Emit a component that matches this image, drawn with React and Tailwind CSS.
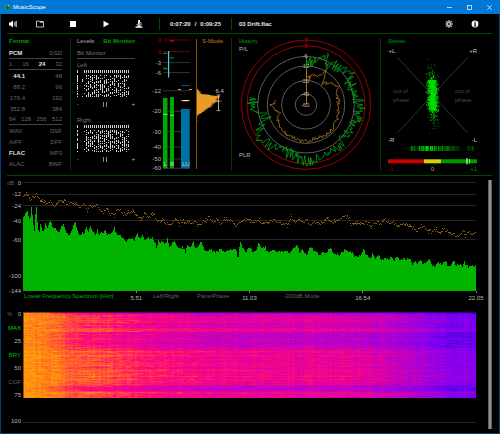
import React from "react";

/* ---------- helpers ---------- */

function seeded(seed) {
  let s = seed;
  return () => {
    s = (s * 1664525 + 1013904223) % 4294967296;
    return s / 4294967296;
  };
}

function interp(points, x) {
  if (x <= points[0][0]) return points[0][1];
  for (let i = 1; i < points.length; i++) {
    if (x <= points[i][0]) {
      const [x0, y0] = points[i - 1];
      const [x1, y1] = points[i];
      return y0 + ((y1 - y0) * (x - x0)) / (x1 - x0);
    }
  }
  return points[points.length - 1][1];
}

function pairs(list) {
  const out = [];
  for (let i = 0; i < list.length; i += 2) out.push([list[i], list[i + 1]]);
  return out;
}

/* ---------- spectrum data, in thirds of a pixel ---------- */

const LEVELS = pairs([
  69, 140, 75, 122, 80, 115, 85, 130, 90, 150, 94, 108, 98, 130, 101, 170, 104, 178, 107, 102, 110, 105, 113, 170, 118, 178,
  121, 155, 126, 172, 131, 180, 136, 155, 141, 165, 146, 160, 151, 143, 156, 165, 162, 170, 170, 172, 176, 185, 182, 165,
  190, 158, 198, 180, 205, 190, 213, 180, 220, 158, 226, 153, 232, 172, 238, 192, 246, 185, 252, 182, 259, 165, 265, 178,
  270, 162, 278, 175, 285, 188, 292, 172, 297, 192, 304, 178, 310, 186, 316, 175, 323, 188, 330, 185, 338, 182, 343, 168,
  350, 188, 360, 188, 368, 200, 378, 208, 385, 198, 395, 200, 403, 205, 410, 183, 418, 198, 426, 188, 434, 202, 442, 195,
  450, 200, 458, 197, 466, 212, 470, 232, 474, 205, 480, 218, 486, 207, 494, 218, 502, 201, 508, 225, 515, 218, 521, 205,
  530, 222, 540, 230, 548, 225, 556, 240, 562, 218, 570, 228, 580, 210, 586, 228, 594, 222, 604, 208, 612, 235, 620, 240,
  630, 230, 640, 238, 650, 240, 660, 232, 670, 238, 680, 237, 690, 234, 700, 232, 708, 228, 714, 262, 720, 212, 728, 225,
  738, 240, 745, 228, 758, 240, 766, 232, 773, 215, 782, 225, 792, 225, 800, 240, 810, 235, 818, 232, 826, 242, 835, 235,
  845, 240, 855, 235, 865, 242, 875, 232, 882, 228, 888, 215, 894, 240, 902, 232, 910, 240, 918, 250, 928, 222, 938, 240,
  945, 235, 955, 252, 963, 240, 972, 245, 980, 235, 988, 230, 996, 240, 1006, 245, 1015, 250, 1022, 240, 1032, 232,
  1042, 242, 1050, 238, 1060, 252, 1070, 255, 1078, 250, 1087, 233, 1096, 248, 1105, 260, 1115, 245, 1122, 260, 1132, 250,
  1140, 262, 1150, 258, 1160, 262, 1170, 255, 1180, 265, 1188, 250, 1195, 265, 1205, 260, 1215, 262, 1224, 258, 1234, 275,
  1242, 270, 1250, 275, 1258, 262, 1266, 278, 1275, 272, 1284, 260, 1293, 280, 1302, 282, 1312, 270, 1322, 280, 1332, 265,
  1342, 285, 1350, 280, 1358, 267, 1366, 280, 1376, 275, 1384, 285, 1390, 270, 1400, 285, 1410, 278, 1420, 283, 1426, 272,
]);

const PEAKS = pairs([
  69, 74, 80, 66, 90, 80, 100, 75, 108, 68, 115, 80, 122, 85, 130, 90, 140, 92, 150, 88, 160, 100, 170, 95, 180, 88, 195, 85,
  200, 95, 210, 88, 220, 98, 230, 95, 240, 105, 250, 95, 260, 110, 270, 98, 280, 105, 290, 98, 300, 112, 310, 120, 320, 110,
  330, 125, 342, 130, 350, 115, 360, 110, 368, 125, 380, 127, 390, 120, 396, 112, 405, 125, 415, 135, 425, 138, 435, 122,
  445, 138, 455, 125, 462, 130, 470, 145, 480, 148, 490, 145, 500, 155, 512, 152, 525, 140, 535, 150, 545, 147, 555, 153,
  565, 143, 575, 155, 583, 145, 595, 160, 605, 148, 615, 150, 625, 135, 632, 140, 642, 150, 650, 135, 660, 155, 668, 145,
  680, 138, 690, 142, 700, 155, 710, 160, 720, 150, 730, 140, 740, 140, 750, 148, 770, 147, 780, 150, 800, 152, 815, 143,
  830, 148, 845, 158, 860, 150, 870, 135, 880, 150, 895, 140, 905, 150, 915, 140, 925, 155, 940, 148, 955, 153, 970, 148,
  980, 132, 990, 150, 1005, 148, 1015, 140, 1030, 132, 1040, 135, 1050, 155, 1065, 150, 1080, 155, 1095, 152, 1110, 160,
  1125, 150, 1140, 153, 1150, 140, 1160, 150, 1175, 150, 1190, 162, 1205, 150, 1220, 160, 1235, 165, 1245, 178, 1260, 160,
  1275, 168, 1290, 178, 1300, 172, 1315, 180, 1330, 172, 1340, 180, 1355, 185, 1370, 192, 1385, 178, 1395, 185, 1405, 178,
  1415, 188, 1426, 182,
]);

function spectrumPath() {
  const rnd = seeded(7);
  let d = "M0 115";
  for (let x = 0; x < 452; x++) {
    const y = interp(LEVELS, 69 + x * 3 + 1) / 3 - 4 + (rnd() - 0.5) * 2.4;
    d += `V${y.toFixed(1)}H${x + 1}`;
  }
  return d + "V115Z";
}

function peakPath() {
  const rnd = seeded(21);
  let d = "";
  for (let x = 0; x < 452; x++) {
    const y = interp(PEAKS, 69 + x * 3) / 3 - 4 + (rnd() - 0.5) * 3;
    d += `M${x} ${Math.round(y)}h1v1h-1z`;
    if (rnd() > 0.75) d += `M${x} ${Math.round(y + (rnd() - 0.5) * 6)}h1v1h-1z`;
  }
  return d;
}

/* ---------- spectrogram ---------- */

const RAMP = [
  [0, 60, 0, 205], [0.2, 122, 0, 245], [0.4, 180, 0, 205], [0.55, 226, 0, 160],
  [0.7, 255, 15, 115], [0.82, 255, 80, 55], [1, 255, 160, 5],
];

function rampColor(v) {
  const ch = [1, 2, 3].map((k) => Math.round(interp(RAMP.map((r) => [r[0], r[k]]), v)));
  return `rgb(${ch.join(",")})`;
}

const FREQ = [[0, 0.98], [0.06, 0.92], [0.1, 0.82], [0.18, 0.76], [0.26, 0.68], [0.33, 0.62], [0.42, 0.57], [0.52, 0.56], [0.65, 0.55], [0.75, 0.51], [0.82, 0.44], [0.9, 0.3], [0.95, 0.23], [1, 0.22]];
const TIME = [[0, -0.18], [2, -0.12], [4, 0], [7, -0.02], [8, 0.06], [11, -0.06], [15, -0.04], [17, 0.1], [19, 0.02], [20, -0.1], [27, -0.1], [34, -0.1], [37, -0.02], [38, 0.05], [50, 0.05], [60, 0.07], [71, 0.07], [73, -0.02], [75, -0.12], [78, -0.1], [80, 0.1], [83, -0.01], [86, -0.03]];
const STEPS = 48;

function spectrogramLayers() {
  const rnd = seeded(99);
  const cols = 226;
  const rows = 86;
  const colNoise = Array.from({ length: cols }, () => (rnd() - 0.5) * 0.05);
  const layers = Array.from({ length: STEPS }, () => "");
  for (let y = 0; y < rows; y++) {
    const row = interp(TIME, y) + (rnd() - 0.5) * 0.1;
    let drift = 0;
    for (let x = 0; x < cols; x++) {
      const f = x / cols;
      drift = drift * 0.6 + (rnd() - 0.5) * 0.09;
      const w = f < 0.06 ? 0.2 : f < 0.12 ? 0.6 : f > 0.8 ? 0.7 : 1;
      const v = interp(FREQ, f) + row * w + colNoise[x] + drift;
      const q = Math.max(0, Math.min(STEPS - 1, Math.round(v * (STEPS - 1))));
      layers[q] += `M${x * 2} ${y}h2v1h-2z`;
    }
  }
  return layers.map((d, i) => ({ d, fill: rampColor(i / (STEPS - 1)) }));
}

/* ---------- radial history, in thirds of a pixel ---------- */

const HIST_GREEN = [[0, 138], [8, 128], [15, 142], [23, 160], [30, 132], [36, 148], [45, 146], [56, 172], [62, 145], [75, 150], [90, 160], [105, 158], [120, 150], [135, 155], [150, 162], [165, 160], [173, 176], [180, 168], [195, 155], [210, 155], [225, 165], [235, 172], [245, 150], [252, 122], [258, 128], [263, 160], [270, 160], [279, 160]];
const HIST_ORANGE = [[0, 92], [8, 82], [15, 98], [22, 85], [30, 115], [38, 80], [48, 95], [60, 110], [75, 96], [90, 98], [110, 100], [130, 106], [150, 108], [165, 104], [178, 110], [195, 106], [215, 104], [235, 104], [245, 94], [252, 84], [260, 92], [268, 108], [274, 92], [279, 98]];

function radialPath(points, amp, step, seed) {
  const rnd = seeded(seed);
  let d = "";
  for (let a = 0; a <= 278; a += step) {
    const r = (interp(points, a) + (rnd() - 0.5) * 2 * amp) / 3;
    const t = (a * Math.PI) / 180;
    d += `${d ? "L" : "M"}${(74 + r * Math.sin(t)).toFixed(1)} ${(70.7 - r * Math.cos(t)).toFixed(1)}`;
  }
  return d;
}

function cloudPath() {
  const rnd = seeded(5);
  const gauss = () => rnd() + rnd() + rnd() + rnd() - 2;
  let d = "";
  for (let i = 0; i < 1700; i++) {
    const gy = i % 3 ? (rnd() - 0.5) * 1.7 : gauss() * 1.3;
    const x = 52.3 + gauss() * 4.2 + gy * 0.6;
    const y = 61 + gy * 18;
    d += `M${x.toFixed(1)} ${y.toFixed(1)}h.7v.7h-.7z`;
  }
  return d;
}

function bitPath(seed) {
  const rnd = seeded(seed);
  let d = "M0 0h1v3h-1z";
  for (let r = 4; r < 27; r++) if (rnd() > 0.3) d += `M0 ${r}h1v1h-1z`;
  for (let c = 3; c < 27; c++) {
    const x = c * 2 - 1;
    if (c > 3) d += `M${x} 0h1v3h-1z`;
    const density = c < 5 ? 0.8 : 0.48;
    for (let r = 5; r < 27; r++) if (rnd() > density) d += `M${x} ${r}h1v1h-1z`;
  }
  return d;
}

/* ---------- panels ---------- */

function TitleBar() {
  return (
    <header className="flex h-[14px] items-center bg-[#0078d7] pl-1 text-white">
      <svg viewBox="0 0 8 8" className="mr-[2px] size-[7px]">
        <circle cx="4" cy="4" r="4" fill="#1b8f86" />
        <path d="M4.6 1 3 4.2l1.4.6L2.6 7M5.4 3.4 6 6.6" stroke="#0b2c2a" strokeWidth=".9" fill="none" />
        <circle cx="5" cy="1.8" r=".8" fill="#8fe0a8" />
      </svg>
      <h1 className="text-[6px] leading-[8px]">MusicScope</h1>
      <div className="ml-auto flex">
        <button aria-label="Minimize" className="flex h-[14px] w-5 items-center justify-center">
          <svg viewBox="0 0 5 5" className="size-[5px]"><path d="M0 2.5h5" stroke="#d8ecff" strokeWidth=".8" /></svg>
        </button>
        <button aria-label="Maximize" className="flex h-[14px] w-5 items-center justify-center">
          <svg viewBox="0 0 5 5" className="size-[5px]"><rect x=".5" y=".5" width="4" height="4" fill="none" stroke="#d8ecff" strokeWidth=".8" /></svg>
        </button>
        <button aria-label="Close" className="flex h-[14px] w-[21px] items-center justify-center">
          <svg viewBox="0 0 5 5" className="size-[5px]"><path d="M.3.3l4.4 4.4M4.7.3.3 4.7" stroke="#e8f4ff" strokeWidth=".8" /></svg>
        </button>
      </div>
    </header>
  );
}

function Tool({ label, className, children }) {
  return (
    <button aria-label={label} className={`flex h-full items-center justify-center ${className}`}>
      <svg viewBox="0 0 16 16" className="size-[8px]" fill="#fff">{children}</svg>
    </button>
  );
}

function Toolbar() {
  return (
    <div className="mr-[7px] flex h-[19px] items-center text-[6px] font-bold leading-[8px] text-[#e8e8e8]">
      <Tool label="Volume" className="w-[23px]">
        <path d="M0 5h3l5-4v14l-5-4H0z" />
        <path d="M10 5q2 3 0 6M12 3q3.500 5 0 10M14.200 1.500q3 6.500 0 13" fill="none" stroke="#fff" strokeWidth="1.400" />
      </Tool>
      <Tool label="Open file" className="w-8">
        <path d="M1 14V2h5l1.500 2.500H15V14z" fill="none" stroke="#ddd" strokeWidth="1.700" />
        <path d="M8.500 3H15" stroke="#ddd" strokeWidth="2" />
      </Tool>
      <Tool label="Stop" className="w-[33px]"><path d="M2 2h12v12H2z" /></Tool>
      <Tool label="Play" className="w-[33px]"><path d="M3 1.500 14.500 8 3 14.500z" /></Tool>
      <Tool label="Analyze" className="w-[33px]">
        <path d="M6.500 0H10v3.500l-1 5.500H6z" />
        <path d="M10 4q4.500 3 1.500 7.500M3 9.500h7" fill="none" stroke="#fff" strokeWidth="1.600" />
        <path d="M1 13h14v2.500H1zM5 11h6v2H5z" />
      </Tool>
      <div className="ml-[4px] flex h-[12px] w-[73px] items-center justify-center gap-[4px] border-x border-[#004a00]">
        <span>0:07:20</span>
        <span>/</span>
        <span>0:09:25</span>
      </div>
      <span className="pl-[7px]">03 Drift.flac</span>
      <Tool label="Settings" className="ml-auto w-[26px]">
        <path d="M8 0v16M0 8h16M2.300 2.300l11.400 11.400M13.700 2.300 2.300 13.700" stroke="#ccc" strokeWidth="2.400" />
        <circle cx="8" cy="8" r="5" fill="#ccc" />
        <circle cx="8" cy="8" r="2.600" fill="#000" />
        <circle cx="8" cy="8" r="1.300" fill="#ccc" />
      </Tool>
      <Tool label="Info" className="mr-1 w-[26px]">
        <circle cx="8" cy="8" r="6.800" />
        <path d="M6.300 6.500h3v5h1.200v1.300H5.800v-1.300h1.200V7.800h-.7zM6.900 3.200h2.400v2.200H6.900z" fill="#000" />
      </Tool>
    </div>
  );
}

const FORMATS = [
  { cells: ["PCM", "DSD"], on: "PCM", line: true },
  { cells: ["1", "16", "24", "32"], on: "24", line: true },
  { cells: ["44.1", "48"], on: "44.1", indent: true },
  { cells: ["88.2", "96"], indent: true },
  { cells: ["176.4", "192"], indent: true },
  { cells: ["352.8", "384"], indent: true },
  { cells: ["64", "128", "256", "512"], line: true },
  { cells: ["WAV", "DSF"] },
  { cells: ["AIFF", "DFF"] },
  { cells: ["FLAC", "MP3"], on: "FLAC" },
  { cells: ["ALAC", "BWF"] },
];

function FormatPanel() {
  return (
    <section className="border-r border-[#003a00] pl-[2px] pr-[8px]">
      <h2 className="h-[10px] font-bold text-[#00a000]">Format</h2>
      <ul>
        {FORMATS.map((row) => (
          <li key={row.cells[0]} className={`flex h-[11px] items-center justify-between ${row.line ? "border-b border-[#444]" : ""}`}>
            {row.cells.map((c, i) => (
              <span
                key={c}
                className={`${row.indent && i === 0 ? "w-[16px] text-right" : ""} ${c === row.on ? "font-bold text-[#e0e0e0]" : ""}`}
              >
                {c}
              </span>
            ))}
          </li>
        ))}
      </ul>
    </section>
  );
}

function Channel({ name, seed }) {
  return (
    <div className="mb-1">
      <h3 className="flex h-[11px] items-center text-[#787878]">{name}</h3>
      <svg viewBox="0 0 58 28" className="block w-full">
        <path d={bitPath(seed)} fill="#d0d0d0" />
      </svg>
      <div className="flex h-[12px] items-center justify-between text-[#b0b0b0]">
        <button aria-label="Decrease">-</button>
        <button aria-label="Pause" className="flex gap-[2px]">
          <i className="h-[5px] w-px bg-[#8a8a8a]" />
          <i className="h-[5px] w-px bg-[#8a8a8a]" />
        </button>
        <button aria-label="Increase">+</button>
      </div>
    </div>
  );
}

function LevelsPanel() {
  return (
    <section className="pl-[6px] pr-[14px]">
      <div className="flex h-[10px] items-start justify-between whitespace-nowrap">
        <button className="text-[#b0b0b0]">Levels</button>
        <button className="font-bold text-[#00a000]">Bit Monitor</button>
      </div>
      <h3 className="flex h-[11px] items-center border-b border-[#444] text-[#787878]">Bit Monitor</h3>
      <Channel name="Left" seed={3} />
      <Channel name="Right" seed={17} />
    </section>
  );
}

const SCALE = [["3", 6, "#c00000"], ["0", 17.6, "#c00000"], ["-3", 28.6, "#bbb"], ["-6", 38.6, "#bbb"], ["-12", 56.7, "#bbb"], ["-20", 77.3, "#bbb"], ["-30", 97.6, "#bbb"], ["-40", 113, "#bbb"], ["-50", 125, "#bbb"], ["-60", 134.3, "#bbb"]];

function MeterPanel() {
  return (
    <section className="relative border-r border-[#003a00]">
      <button className="absolute right-2 top-0 text-[#c8821c]">S-Mode</button>
      <svg viewBox="1 4 82 133" className="block w-full" fontSize="6">
        {SCALE.map(([t, y, c]) => (
          <g key={t}>
            <path d={`M15 ${y}h27`} stroke={c === "#bbb" ? "#333" : "#700000"} strokeWidth="1" />
            <text x="13" y={y + 2} textAnchor="end" fill={c}>{t}</text>
          </g>
        ))}
        <path d="M15 64h4.500v70.300H15zM22 63h4v71.300h-4z" fill="#00a800" />
        <path d="M15 80.300h4.500M22 81.300h4" stroke="#50ff50" />
        <path d="M33 75h8.700v59.300H33z" fill="#00709e" />
        <path d="M33 51.500h8.700" stroke="#00567c" />
        <path d="M15 19.300h4.500M22 23.800h4M15 34.500h4.500" stroke="#00900a" strokeWidth="1.300" />
        <path d="M22 7h4" stroke="#c00020" strokeWidth="1.500" />
        <path d="M20.600 17v26.500" stroke="#50c8f0" strokeWidth="1.200" />
        <path d="M30 55.500h3M41 55.500h3" stroke="#e09a20" />
        <path d="M33 66.600h9" stroke="#e09a20" />
        <path d="M35 66.600h5" stroke="#fff" />
        <g fill="#c8dcd8">
          <text x="15.500" y="132">L</text>
          <text x="21.800" y="132">R</text>
          <text x="34" y="132">LU</text>
        </g>
        <path d="M48.500 5v130" stroke="#8a5600" />
        <path
          d="M49 55 51 56 50 57 53 57.500 51 58.500 54 59 52 60 60 60.500 64 61.500 69 62 72 62.500 72 63.500 68 64 71 65 67 66 70 66.500 75 67 70 67.700 66 68.300 68 69 63 70 66 71 62 72 64 73 59 74 60 75 56 76 57.500 77 54 78 54 79 51 80 50 81.500 49 82z"
          fill="#e89c28"
        />
        <path d="M49 83.500h.8M49 86.500h.6" stroke="#8a5600" />
        <path d="M70.500 61v15.600M68.500 61h4M68.500 76.600h4" stroke="#c8c8c8" fill="none" strokeWidth=".8" />
        <text x="67.500" y="58.500" fill="#c8c8c8">6.4</text>
      </svg>
    </section>
  );
}

const RINGS = [[10.7, "#5c5c5c"], [24.3, "#5c5c5c"], [38.7, "#5c5c5c"], [48.3, "#5c5c5c"], [59, "#9a0000"], [64.7, "#9a0000"]];
const RING_LABELS = [["3", 6, "#c00000"], ["0", 11.7, "#c00000"], ["-6", 22.3, "#b8b8b8"], ["-12", 31.7, "#b8b8b8"], ["-20", 46.7, "#b8b8b8"], ["-40", 60, "#b8b8b8"], ["-60", 70.7, "#b8b8b8"]];

function HistoryPanel() {
  return (
    <section className="relative border-r border-[#003a00]">
      <div className="absolute bottom-0 left-[7px] top-0">
        <h2 className="h-[8px] text-[#00a000]">History</h2>
        <button className="block text-[#b8b8b8]">P/L</button>
        <button className="absolute bottom-[13px] left-0 text-[#b8b8b8]">PLR</button>
      </div>
      <svg viewBox="0 4 148 133" className="block w-full" fontSize="6" fill="none">
        {RINGS.map(([r, c]) => <circle key={r} cx="74" cy="70.700" r={r} stroke={c} strokeWidth="1" />)}
        <path d={radialPath(HIST_GREEN, 17, 1.1, 11)} stroke="#00a818" strokeWidth=".8" />
        <path d={radialPath(HIST_ORANGE, 6, 2, 31)} stroke="#b87818" strokeWidth=".8" />
        <path d="M74.500 23v20" stroke="#00a000" />
        <path d="M74.500 35v35" stroke="#a87410" />
        {RING_LABELS.map(([t, y, c]) => (
          <text key={t} x={t.length === 1 ? 74 : 73} y={y + 2} textAnchor="middle" fill={c}>{t}</text>
        ))}
      </svg>
    </section>
  );
}

function StereoPanel() {
  const rnd = seeded(41);
  const bars = Array.from({ length: 64 }, (_, i) => {
    const core = Math.max(0, 1 - Math.abs(i - 20) / 34);
    const gap = i > 49 && i < 56;
    return { x: 30 + i, o: gap ? 0 : i >= 56 ? rnd() * 0.35 : 0.1 + core * rnd() };
  });
  return (
    <section className="pl-[2px]">
      <h2 className="h-[8px] pl-[5px] text-[#00a000]">Stereo</h2>
      <svg viewBox="3 12 109 125" className="block w-full" fontSize="6">
        <path d="M17.300 23.300 87.700 99M87.700 23.300 17.300 99" stroke="#383838" strokeWidth=".9" />
        <path d={cloudPath()} fill="#00e000" />
        <g fill="#c8c8c8">
          <text x="8.500" y="19">+L</text>
          <text x="97" y="19" textAnchor="end">+R</text>
          <text x="8" y="108">-R</text>
          <text x="97" y="108" textAnchor="end">-L</text>
        </g>
        <g fill="#484848">
          <text x="13" y="59">out of</text>
          <text x="13" y="68">phase</text>
          <text x="75" y="59">out of</text>
          <text x="75" y="68">phase</text>
        </g>
        {bars.map((b) => <rect key={b.x} x={b.x} y="112" width="1" height="5" fill="#00d800" opacity={b.o} />)}
        <path d="M8 125.300h36v4H8z" fill="#c80000" />
        <path d="M44 125.300h17.300v4H44z" fill="#d8d000" />
        <path d="M61.300 125.300H97v4H61.300z" fill="#009a00" />
        <path d="M86.500 124h1v6.500h-1z" fill="#fff" />
        <path d="M89 125h1v4.500h-1z" fill="#60ff60" />
        <text x="8" y="136.500" fill="#a00000">-1</text>
        <text x="52.500" y="136.500" textAnchor="middle" fill="#c8b800">0</text>
        <text x="97" y="136.500" textAnchor="end" fill="#009000">+1</text>
      </svg>
    </section>
  );
}

const DB = [["0", 6.5], ["-12", 18], ["-24", 29.5], ["-40", 44.5], ["-60", 63.5], ["-100", 100], ["-144", 114.5]];

function Mark({ children }) {
  return (
    <span className="flex w-0 flex-col items-center overflow-visible text-[#b8b8b8]">
      <i className="h-[2px] w-px shrink-0 bg-[#888]" />
      <span className="mt-[2px]">{children}</span>
    </span>
  );
}

function Spectrum() {
  return (
    <section className="flex">
      <svg viewBox="0 0 22 115" className="h-[115px] w-[22px] shrink-0 overflow-visible" fontSize="6">
        <text x="6" y="8.500" fill="#606060">dB</text>
        {DB.map(([t, y]) => <text key={t} x="20" y={y + 2} textAnchor="end" fill="#b8b8b8">{t}</text>)}
      </svg>
      <div className="min-w-0 flex-1">
        <svg viewBox="0 0 452 115" preserveAspectRatio="none" className="block h-[115px] w-full" shapeRendering="crispEdges">
          <path d="M0 6.500h452M0 18.500h452M0 29.500h452M0 44.500h452M0 63.500h452" stroke="#242424" />
          <path d={peakPath()} fill="#8a5e08" />
          <path d={spectrumPath()} fill="#00b400" />
        </svg>
        <div className="grid h-[15px] grid-cols-4 whitespace-nowrap text-[#606060]">
          <div className="flex justify-between"><button className="mt-[2px] self-start pl-px text-[#00b000]">Linear Frequency Spectrum [kHz]</button><Mark>5.51</Mark></div>
          <div className="flex justify-between"><span className="mt-[2px] flex gap-[18px] self-start pl-[17px]"><button>Left/Right</button><button>Pans/Phase</button></span><Mark>11.03</Mark></div>
          <div className="flex justify-between"><button className="mt-[2px] self-start pl-[34px]">-200dB Mode</button><Mark>16.54</Mark></div>
          <div className="flex justify-end"><Mark>22.05</Mark></div>
        </div>
      </div>
    </section>
  );
}

function Spectrogram() {
  return (
    <section className="flex">
      <div className="flex w-[22px] shrink-0 flex-col items-end pr-[2px] pt-[5px] text-[#b8b8b8]">
        <div className="flex h-[87px] w-full flex-col items-end justify-between">
          <div className="flex w-full justify-between pl-[6px]"><span className="text-[#606060]">%</span><span>0</span></div>
          <button className="text-[#00d000]">MAX</button>
          <span>25</span>
          <button className="text-[#00b000]">BRY</button>
          <span>50</span>
          <button className="text-[#606060]">CGF</button>
          <span>75</span>
        </div>
        <span className="mt-[20px]">100</span>
      </div>
      <div className="min-w-0 flex-1 pt-[6px]">
        <svg viewBox="0 0 452 86" preserveAspectRatio="none" className="block h-[86px] w-full" shapeRendering="crispEdges">
          {spectrogramLayers().map((l) => <path key={l.fill} d={l.d} fill={l.fill} />)}
          <path d="M0 0h452v1H0zM0 0h1v86H0z" fill="#000" opacity=".45" />
        </svg>
        <div className="mb-[10px] h-[25px] border-b border-[#242424]" />
      </div>
    </section>
  );
}

export default function App() {
  return (
    <div className="min-h-screen bg-black font-['Liberation_Sans',Arial,sans-serif] text-[6px] leading-[6px] text-[#686868]">
      <TitleBar />
      <main className="border-x border-b border-[#00407a]">
        <Toolbar />
        <div className="ml-[6px] mr-[7px] grid grid-cols-[64fr_78fr_83fr_149fr_111fr] border-y border-[#004a00] py-1">
          <FormatPanel />
          <LevelsPanel />
          <MeterPanel />
          <HistoryPanel />
          <StereoPanel />
        </div>
        <div className="flex pr-[7px]">
          <div className="min-w-0 flex-1">
            <Spectrum />
            <Spectrogram />
          </div>
          <div className="mb-1 ml-[12px] mt-1 w-1 border-x border-[#606060] bg-[#909090]" />
        </div>
      </main>
    </div>
  );
}
